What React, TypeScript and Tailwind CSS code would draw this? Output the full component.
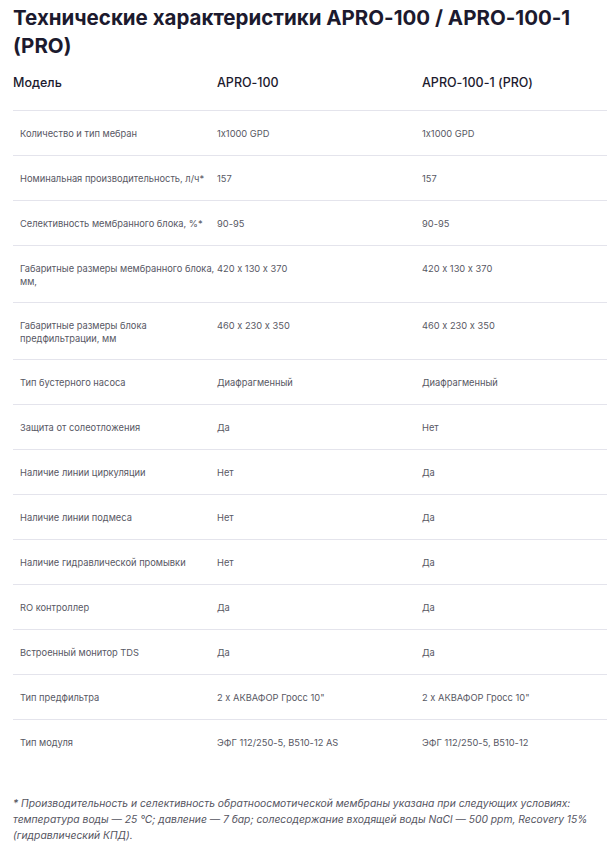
const rows: [string, string, string][] = [
  ["Количество и тип мебран", "1x1000 GPD", "1x1000 GPD"],
  ["Номинальная производительность, л/ч*", "157", "157"],
  ["Селективность мембранного блока, %*", "90-95", "90-95"],
  ["Габаритные размеры мембранного блока, мм,", "420 x 130 x 370", "420 x 130 x 370"],
  ["Габаритные размеры блока предфильтрации, мм", "460 x 230 x 350", "460 x 230 x 350"],
  ["Тип бустерного насоса", "Диафрагменный", "Диафрагменный"],
  ["Защита от солеотложения", "Да", "Нет"],
  ["Наличие линии циркуляции", "Нет", "Да"],
  ["Наличие линии подмеса", "Нет", "Да"],
  ["Наличие гидравлической промывки", "Нет", "Да"],
  ["RO контроллер", "Да", "Да"],
  ["Встроенный монитор TDS", "Да", "Да"],
  ["Тип предфильтра", "2 x АКВАФОР Гросс 10\"", "2 x АКВАФОР Гросс 10\""],
  ["Тип модуля", "ЭФГ 112/250-5, В510-12 AS", "ЭФГ 112/250-5, В510-12"],
];

export default function App() {
  return (
    <div className="min-h-[853px] bg-white pl-[13px] pt-[4px] font-['Inter',sans-serif] text-[#1c1a2e] [font-feature-settings:'calt'_0]">
      <h1 className="pr-4 text-[20.5px] font-bold leading-[28px]">
        Технические характеристики APRO-100 / <span className="whitespace-nowrap">APRO-100-1</span> (PRO)
      </h1>
      <div className="grid h-[51px] grid-cols-[204px_205px_1fr] items-start border-b border-[#e4e4ec] pt-[15px] text-[12.5px] font-medium leading-[16px]">
        <div>Модель</div>
        <div>APRO-100</div>
        <div>APRO-100-1 (PRO)</div>
      </div>
      {rows.map((r, i) => (
        <div
          key={r[0]}
          className={[
            "grid grid-cols-[204px_205px_1fr] items-start pt-[16px] text-[9.3px] leading-[13px] text-[#585864]",
            r[0].length > 40 ? "h-[57px]" : "h-[45px]",
            i < rows.length - 1 && "border-b border-[#e4e4ec]",
          ]
            .filter(Boolean)
            .join(" ")}
        >
          <div className="pl-[7px]">{r[0]}</div>
          <div>{r[1]}</div>
          <div>{r[2]}</div>
        </div>
      ))}
      <p className="mt-[30px] pr-[4px] text-[10.3px] italic leading-[16px] text-[#55555f]">
        * Производительность и селективность обратноосмотической мембраны указана при следующих условиях:
        температура воды — 25 °С; давление — 7 бар; солесодержание входящей воды NaCl — 500 ppm, Recovery 15%
        (гидравлический КПД).
      </p>
    </div>
  );
}
